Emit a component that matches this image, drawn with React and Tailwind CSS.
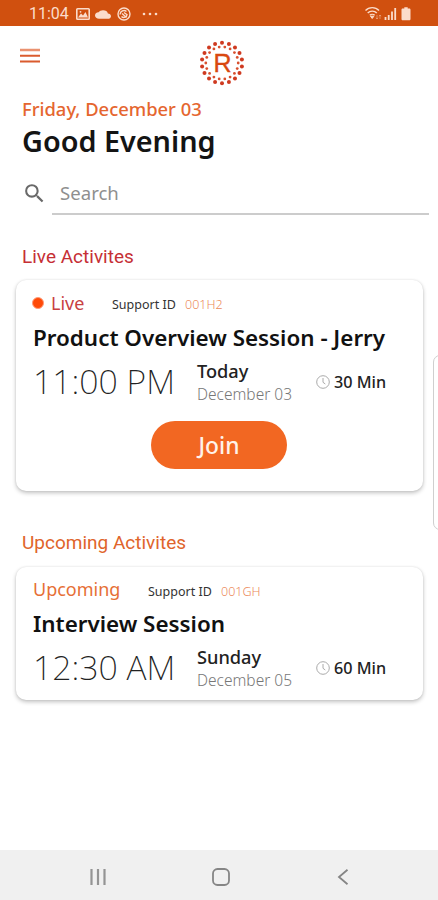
import React from 'react';
import { MdSearch, MdCloud } from 'react-icons/md';

const liveSession = {
  status: 'Live',
  supportId: '001H2',
  title: 'Product Overview Session - Jerry',
  time: '11:00 PM',
  day: 'Today',
  date: 'December 03',
  duration: '30 Min',
  live: true
};

const upcomingSession = {
  status: 'Upcoming',
  supportId: '001GH',
  title: 'Interview Session',
  time: '12:30 AM',
  day: 'Sunday',
  date: 'December 05',
  duration: '60 Min',
  live: false
};

const ringSteps = Array.from({ length: 18 }, (_, i) => i);

function ringPoint(radius, degrees) {
  const rad = (degrees * Math.PI) / 180;
  return { cx: 24 + radius * Math.sin(rad), cy: 24 - radius * Math.cos(rad) };
}

function Logo() {
  return (
    <svg className="w-12 h-12" viewBox="0 0 48 48">
      {ringSteps.map(i => (
        <circle key={`outer-${i}`} {...ringPoint(20.2, i * 20)} r="2" fill="#cf3a20" />
      ))}
      {ringSteps.map(i => (
        <circle key={`inner-${i}`} {...ringPoint(16.2, i * 20 + 10)} r="1.4" fill="#d8502f" />
      ))}
      <text x="24.6" y="32.6" textAnchor="middle" fontFamily="Liberation Sans, sans-serif" fontSize="25" stroke="#d9480f" strokeWidth="0.4" fill="#d9480f">R</text>
    </svg>
  );
}

function StatusBar() {
  return (
    <div className="h-[26px] bg-[#d0500f] flex items-center justify-between pl-[29px] pr-[27px] text-[#fbdccb]">
      <div className="flex items-center pt-[2px]">
        <span className="w-[47px] font-['Roboto',sans-serif] text-[16px] leading-5 whitespace-nowrap">11:04</span>
        <svg className="w-[14px] h-[12px]" viewBox="0 0 14 12" fill="none" stroke="currentColor" strokeWidth="1.6">
          <rect x="0.8" y="0.8" width="12.4" height="10.4" rx="0.8" />
          <path d="M2 9.500 5 5.500l2 2 2.500-3.500L12 9.500z" fill="currentColor" stroke="none" />
          <circle cx="4.5" cy="3.8" r="0.9" fill="currentColor" stroke="none" />
        </svg>
        <MdCloud className="ml-[5px] w-[16px] h-[13px]" preserveAspectRatio="none" />
        <svg className="ml-[6px] w-[14px] h-[14px]" viewBox="0 0 14 14" fill="none" stroke="currentColor" strokeWidth="1.4">
          <circle cx="7" cy="7" r="6" />
          <path d="M3 7.500C3.200 4 7 2.500 9.500 4.500M4.500 9.500c2 2 5.500.500 5.500-2M5 6.500l4.500 4M7 5.500l3.500 2.500" />
        </svg>
        <svg className="ml-[11px] w-4 h-[4px]" viewBox="0 0 16 4" fill="currentColor">
          <circle cx="2" cy="2" r="1.3" />
          <circle cx="8" cy="2" r="1.3" />
          <circle cx="14" cy="2" r="1.3" />
        </svg>
      </div>
      <svg className="w-[46px] h-[15px]" viewBox="0 0 46 15" fill="none" stroke="currentColor">
        <path d="M0.500 4.500C4 .7 10.500.7 14 4.500M2.700 7c2.400-2.500 6.700-2.500 9.100 0M4.800 9.300c1.300-1.300 3.600-1.300 4.900 0" strokeWidth="1.400" />
        <path d="M7.200 12.500 5.500 10.200h3.400z" fill="currentColor" />
        <path d="M12 9v4m-1-1.200 1 1.200 1-1.200M15 13V9m-1 1.200L15 9l1 1.200" strokeWidth="0.700" opacity="0.6" />
        <path d="M20.500 14v-3M23.700 14V9M27 14V5.500M30.200 14V2" strokeWidth="1.800" />
        <path d="M39.300 1.200h3.400v1.300h1.500c.8 0 1.300.500 1.300 1.300v9.200c0 .8-.5 1.300-1.300 1.300h-6.400c-.8 0-1.300-.5-1.300-1.300V3.800c0-.8.5-1.300 1.300-1.300h1.500z" fill="currentColor" stroke="none" />
      </svg>
    </div>
  );
}

function ClockIcon() {
  return (
    <svg className="w-[14px] h-[14px] shrink-0" viewBox="0 0 14 14" fill="none" stroke="#aaaaaa" strokeWidth="1">
      <circle cx="7" cy="7" r="6.300" />
      <path d="M7 3v4.300l2.300 1.700" />
    </svg>
  );
}

function SessionCard({ session }) {
  return (
    <div className="ml-4 mr-[15px] rounded-[10px] bg-white pl-[17px] shadow-[0_2px_4px_rgba(0,0,0,0.24),0_0_2px_rgba(0,0,0,0.1)]">
      <div className="flex items-baseline h-[28px] leading-[28px] whitespace-nowrap">
        {session.live ? (
          <div className="w-[79px] flex items-center">
            <span className="-ml-px w-[12px] h-[12px] rounded-full bg-[#ff4a08] border border-[#ff9a78]"></span>
            <span className="ml-[7px] text-[18px] text-[#c84042]">{session.status}</span>
          </div>
        ) : (
          <div className="w-[115px] text-[18px] text-[#e66f36]">{session.status}</div>
        )}
        <span className="w-[73px] text-[12.5px] text-[#333333]">Support ID</span>
        <span className="text-[12.5px] font-light text-[#ec8a5a]">{session.supportId}</span>
      </div>
      <h3 className="mt-[5px] text-[22.400px] leading-[32px] font-semibold text-[#111111] whitespace-nowrap">{session.title}</h3>
      <div className="mt-[5px] flex h-[46px] whitespace-nowrap">
        <div className="w-[164px] text-[33.800px] leading-[44px] font-extralight text-[#222222]">{session.time}</div>
        <div className="w-[119px] pt-px">
          <div className="text-[18.200px] leading-[22px] font-medium text-[#222222]">{session.day}</div>
          <div className="text-[15.500px] leading-[24px] font-light text-[#777777]">{session.date}</div>
        </div>
        <div className="flex items-center gap-[4px]">
          <ClockIcon />
          <span className="text-[16.200px] leading-[22px] font-medium text-[#222222]">{session.duration}</span>
        </div>
      </div>
      {session.live && (
        <button className="block mt-[16px] ml-[118px] w-[136px] h-[48px] pt-[2px] rounded-[24px] bg-[#f26722] text-[22.800px] leading-[46px] font-medium text-[#fff3ea]">
          Join
        </button>
      )}
    </div>
  );
}

function NavBar() {
  return (
    <div className="h-[50px] bg-[#f0f0f0] flex items-center pt-[3px] pl-[90px] pr-[89px] justify-between">
      <svg className="w-[16px] h-[16px]" viewBox="0 0 16 16" stroke="#949494" strokeWidth="2.200">
        <path d="M1.500 0v16M8 0v16M14.500 0v16" />
      </svg>
      <svg className="w-[18px] h-[18px] mr-[2px]" viewBox="0 0 18 18" fill="none" stroke="#858585" strokeWidth="1.800">
        <rect x="1" y="1" width="16" height="16" rx="4.500" />
      </svg>
      <svg className="w-[12px] h-[16px]" viewBox="0 0 12 16" fill="none" stroke="#858585" strokeWidth="1.800">
        <path d="M10.500 .8 2 8l8.500 7.200" />
      </svg>
    </div>
  );
}

export default function App() {
  return (
    <div className="relative w-[438px] h-[900px] overflow-hidden bg-white flex flex-col font-['Noto_Sans','Open_Sans',sans-serif]">
      <StatusBar />

      {/* Header */}
      <div className="h-[70px] grid grid-cols-3 pt-[13px]">
        <svg className="ml-5 mt-[9px] w-5 h-4" viewBox="0 0 20 16" stroke="#da5b2e" strokeWidth="2">
          <path d="M0 2h20" stroke="#ea9270" strokeWidth="2.500" />
          <path d="M0 7.700h20M0 13.400h20" />
        </svg>
        <div className="flex justify-center pl-[6px]">
          <Logo />
        </div>
      </div>

      {/* Greeting */}
      <div className="pl-[22px] whitespace-nowrap">
        <p className="text-[18.400px] leading-[25px] font-medium text-[#e5662f]">Friday, December 03</p>
        <h1 className="mt-px text-[28.800px] leading-[38px] font-semibold text-[#141414]">Good Evening</h1>
      </div>

      {/* Search */}
      <div className="mt-[14px] h-[41px] flex pl-[23px] pr-[9px]">
        <MdSearch className="w-[25px] h-[25px] mt-[7px] -ml-px text-[#696969]" />
        <div className="ml-[5px] flex-1 h-[41px] pl-2 border-b-2 border-[#cccccc] text-[18.600px] leading-[38px] text-[#8f8f8f]">Search</div>
      </div>

      <h2 className="mt-[28px] pl-[22px] h-[28px] font-['Roboto',sans-serif] text-[19px] leading-[28px] text-[#c62f35]">Live Activites</h2>
      <div className="h-[211px] mt-[9px] grid [&>div]:pt-[9px]">
        <SessionCard session={liveSession} />
      </div>

      <h2 className="mt-[38px] pl-[22px] h-[28px] font-['Roboto',sans-serif] text-[19px] leading-[28px] text-[#e0642b]">Upcoming Activites</h2>
      <div className="h-[133px] mt-[10px] grid [&>div]:pt-[8px]">
        <SessionCard session={upcomingSession} />
      </div>

      <div className="mt-auto">
        <NavBar />
      </div>

      {/* Edge panel handle */}
      <div className="absolute left-[433px] top-[355px] w-[12px] h-[175px] rounded-l-[7px] border border-[#cfcfcf] bg-white"></div>
    </div>
  );
}
